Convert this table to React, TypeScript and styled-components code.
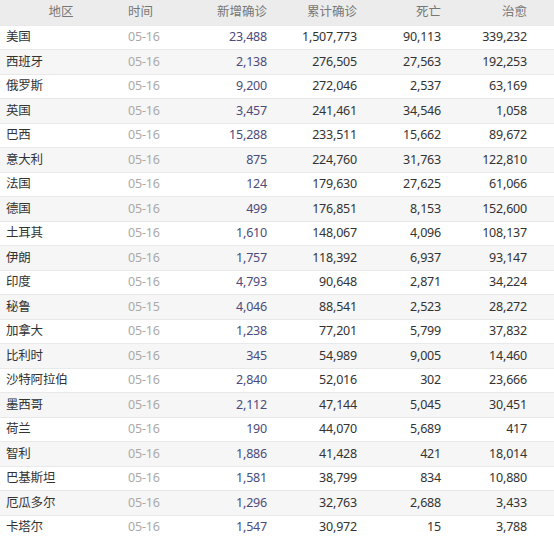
import React from 'react';
import styled, { createGlobalStyle } from 'styled-components';

type Row = [string, string, string, string, string, string];

const rows: Row[] = [
  ['美国', '05-16', '23,488', '1,507,773', '90,113', '339,232'],
  ['西班牙', '05-16', '2,138', '276,505', '27,563', '192,253'],
  ['俄罗斯', '05-16', '9,200', '272,046', '2,537', '63,169'],
  ['英国', '05-16', '3,457', '241,461', '34,546', '1,058'],
  ['巴西', '05-16', '15,288', '233,511', '15,662', '89,672'],
  ['意大利', '05-16', '875', '224,760', '31,763', '122,810'],
  ['法国', '05-16', '124', '179,630', '27,625', '61,066'],
  ['德国', '05-16', '499', '176,851', '8,153', '152,600'],
  ['土耳其', '05-16', '1,610', '148,067', '4,096', '108,137'],
  ['伊朗', '05-16', '1,757', '118,392', '6,937', '93,147'],
  ['印度', '05-16', '4,793', '90,648', '2,871', '34,224'],
  ['秘鲁', '05-15', '4,046', '88,541', '2,523', '28,272'],
  ['加拿大', '05-16', '1,238', '77,201', '5,799', '37,832'],
  ['比利时', '05-16', '345', '54,989', '9,005', '14,460'],
  ['沙特阿拉伯', '05-16', '2,840', '52,016', '302', '23,666'],
  ['墨西哥', '05-16', '2,112', '47,144', '5,045', '30,451'],
  ['荷兰', '05-16', '190', '44,070', '5,689', '417'],
  ['智利', '05-16', '1,886', '41,428', '421', '18,014'],
  ['巴基斯坦', '05-16', '1,581', '38,799', '834', '10,880'],
  ['厄瓜多尔', '05-16', '1,296', '32,763', '2,688', '3,433'],
  ['卡塔尔', '05-16', '1,547', '30,972', '15', '3,788'],
];

const GlobalStyle = createGlobalStyle`
  body {
    margin: 0;
    background: #fff;
    font-family: "Noto Sans", "Noto Sans CJK SC", sans-serif;
  }
`;

const Table = styled.table`
  width: 554px;
  border-collapse: collapse;
  table-layout: fixed;
  font-size: 12.5px;
  color: #333;
`;

const HeadRow = styled.tr`
  height: 25px;
  background: #ececec;
`;

const Th = styled.th<{ $align: 'left' | 'center' | 'right'; $pad?: number }>`
  font-weight: normal;
  color: #777;
  text-align: ${({ $align }) => $align};
  padding: 0 ${({ $pad }) => $pad ?? 6}px 0 ${({ $align }) => ($align === 'left' ? 6 : 0)}px;
  line-height: 1;
`;

const BodyRow = styled.tr<{ $striped: boolean }>`
  height: 24.5px;
  background: ${({ $striped }) => ($striped ? '#f6f6f6' : '#fff')};
  border-top: 1px solid #e9e9e9;
`;

const Td = styled.td<{ $align: 'left' | 'right'; $tone?: 'muted' | 'accent'; $pad?: number }>`
  padding: 0 ${({ $pad }) => $pad ?? 6}px 0 ${({ $align }) => ($align === 'left' ? 6 : 0)}px;
  text-align: ${({ $align }) => $align};
  color: ${({ $tone }) => ($tone === 'muted' ? '#a9a9a9' : $tone === 'accent' ? '#4b4b7c' : '#333')};
  line-height: 1;
  white-space: nowrap;
  letter-spacing: -0.2px;
`;

export default function App() {
  return (
    <>
      <GlobalStyle />
      <Table>
        <colgroup>
          <col style={{ width: 122 }} />
          <col style={{ width: 60 }} />
          <col style={{ width: 91 }} />
          <col style={{ width: 90 }} />
          <col style={{ width: 84 }} />
          <col />
        </colgroup>
        <thead>
          <HeadRow>
            <Th $align="center" $pad={0}>地区</Th>
            <Th $align="left">时间</Th>
            <Th $align="right">新增确诊</Th>
            <Th $align="right">累计确诊</Th>
            <Th $align="right">死亡</Th>
            <Th $align="right" $pad={27}>治愈</Th>
          </HeadRow>
        </thead>
        <tbody>
          {rows.map((r, i) => (
            <BodyRow key={r[0]} $striped={i % 2 === 1}>
              <Td $align="left">{r[0]}</Td>
              <Td $align="left" $tone="muted">{r[1]}</Td>
              <Td $align="right" $tone="accent">{r[2]}</Td>
              <Td $align="right">{r[3]}</Td>
              <Td $align="right">{r[4]}</Td>
              <Td $align="right" $pad={27}>{r[5]}</Td>
            </BodyRow>
          ))}
        </tbody>
      </Table>
    </>
  );
}
